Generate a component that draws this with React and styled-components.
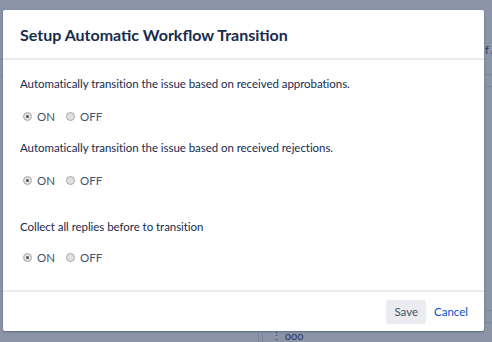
import React from "react";
import styled, { createGlobalStyle } from "styled-components";

const Global = createGlobalStyle`
  html, body { margin: 0; padding: 0; }
  body {
    width: 492px;
    height: 342px;
    overflow: hidden;
    background: #8b94a6;
    font-family: Lato, "Open Sans", sans-serif;
    color: #172b4d;
  }
`;

const Screen = styled.div`
  position: relative;
  width: 492px;
  height: 342px;
  overflow: hidden;
  background: #8b94a6;
`;

const Behind = styled.div`
  position: absolute;
  inset: 0;
  pointer-events: none;
`;

const HLine = styled.div`
  position: absolute;
  left: ${(p) => p.$x}px;
  top: ${(p) => p.$y}px;
  width: ${(p) => p.$w}px;
  height: 1px;
  background: #7d879a;
`;

const VLine = styled.div`
  position: absolute;
  left: ${(p) => p.$x}px;
  top: ${(p) => p.$y}px;
  width: 1px;
  height: ${(p) => p.$h}px;
  background: #7d879a;
`;

const Fragment = styled.span`
  position: absolute;
  left: ${(p) => p.$x}px;
  top: ${(p) => p.$y}px;
  font-size: 11px;
  line-height: 12px;
  color: ${(p) => p.$c || "#2b3a5a"};
  white-space: nowrap;
`;

const Modal = styled.div`
  position: absolute;
  left: 3px;
  top: 10px;
  width: 481px;
  height: 321px;
  background: #fff;
  border-radius: 2px;
  box-shadow: 0 1px 2px rgba(9, 30, 66, 0.35);
  display: flex;
  flex-direction: column;
`;

const Header = styled.div`
  height: 48px;
  padding: 0 17px;
  display: flex;
  align-items: center;
  border-bottom: 2px solid #ebecf0;
  flex-shrink: 0;
`;

const Title = styled.h2`
  margin: 0;
  font-size: 16px;
  font-weight: 700;
  color: #172b4d;
`;

const Body = styled.div`
  flex: 1;
  padding: 14px 17px 0;
  display: flex;
  flex-direction: column;
  border-bottom: 2px solid #ebecf0;
`;

const Question = styled.div`
  font-size: 11.5px;
  line-height: 20px;
  letter-spacing: -0.05px;
  color: #172b4d;
  margin-top: ${(p) => p.$mt || 0}px;
`;

const RadioRow = styled.div`
  display: flex;
  align-items: center;
  height: 20px;
  margin-top: ${(p) => p.$mt || 12}px;
  padding-left: 3px;
  gap: 11px;
`;

const Option = styled.label`
  display: flex;
  align-items: center;
  gap: 5px;
  font-size: 11.5px;
  color: #42526e;
`;

const Dot = styled.span`
  width: 9px;
  height: 9px;
  border-radius: 50%;
  background: #e2e2e2;
  border: 1px solid #a8a8a8;
  box-sizing: border-box;
  display: inline-flex;
  align-items: center;
  justify-content: center;
  &::after {
    content: "";
    width: 3px;
    height: 3px;
    border-radius: 50%;
    background: ${(p) => (p.$on ? "#555" : "transparent")};
  }
`;

const Footer = styled.div`
  height: 39px;
  flex-shrink: 0;
  display: flex;
  align-items: center;
  justify-content: flex-end;
  padding: 0 8px 0 0;
  gap: 0;
`;

const Button = styled.button`
  height: 24px;
  padding: 0 8px;
  border: none;
  border-radius: 3px;
  font-family: inherit;
  font-size: 11.5px;
  background: ${(p) => (p.$link ? "transparent" : "#ebecf0")};
  color: ${(p) => (p.$link ? "#0052cc" : "#42526e")};
  cursor: pointer;
`;

function Choice() {
  return (
    <>
      <Option>
        <Dot $on />
        ON
      </Option>
      <Option>
        <Dot />
        OFF
      </Option>
    </>
  );
}

export default function App() {
  return (
    <>
      <Global />
      <Screen>
        <Behind>
          <Fragment $x={-3} $y={42} $c="#3a5fa6">l</Fragment>
          <HLine $x={0} $y={59} $w={3} />
          <HLine $x={0} $y={75} $w={3} />
          <Fragment $x={485} $y={44}>f A</Fragment>
          <HLine $x={484} $y={74} $w={8} />
          <HLine $x={484} $y={86} $w={8} />
          <HLine $x={484} $y={310} $w={8} />
          <HLine $x={484} $y={322} $w={8} />
          <VLine $x={258} $y={331} $h={11} />
          <VLine $x={262} $y={331} $h={11} />
          <Fragment $x={271} $y={330} $c="#2b3a6a">⋮ ooo</Fragment>
        </Behind>
        <Modal>
          <Header>
            <Title>Setup Automatic Workflow Transition</Title>
          </Header>
          <Body>
            <Question>Automatically transition the issue based on received approbations.</Question>
            <RadioRow>
              <Choice />
            </RadioRow>
            <Question $mt={12}>Automatically transition the issue based on received rejections.</Question>
            <RadioRow>
              <Choice />
            </RadioRow>
            <Question $mt={27}>Collect all replies before to transition</Question>
            <RadioRow $mt={10}>
              <Choice />
            </RadioRow>
          </Body>
          <Footer>
            <Button>Save</Button>
            <Button $link>Cancel</Button>
          </Footer>
        </Modal>
      </Screen>
    </>
  );
}
